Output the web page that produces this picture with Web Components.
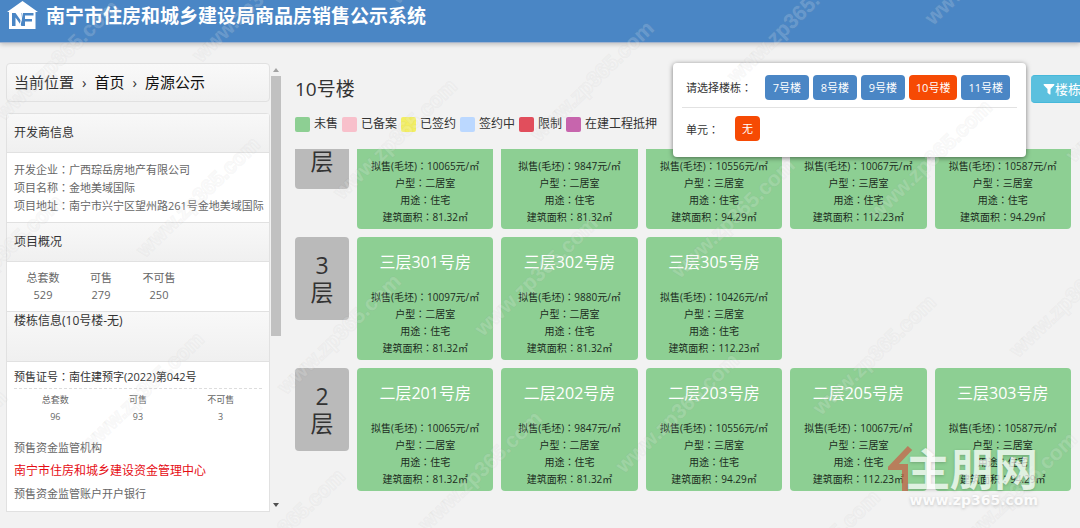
<!DOCTYPE html>
<html lang="zh-CN">
<head>
<meta charset="utf-8">
<title>南宁市住房和城乡建设局商品房销售公示系统</title>
<style>
html,body{height:100%}
body{margin:0;background:#f2f2f2;color:#333;font-family:"Open Sans","Noto Sans CJK SC",sans-serif;overflow:hidden}
</style>
</head>
<body>
<sales-app></sales-app>
<script>
const base='<style>*{box-sizing:border-box}:host{display:block}a{color:inherit;text-decoration:none}button{font-family:inherit;cursor:pointer}.colon{font-family:"Noto Sans CJK TC",sans-serif;line-height:0}</style>';
/* Full-width colons are set from the face that centres them in their cell. */
const centreColons=html=>html.replace(/：/g,'<span class="colon" lang="zh-TW">：</span>');
function define(name,render){
  customElements.define(name,class extends HTMLElement{
    connectedCallback(){
      if(this.shadowRoot)return;
      this.attachShadow({mode:'open'}).innerHTML=base+centreColons(render(this));
    }
  });
}

define('app-header',()=>`<style>
:host{background:#4a86c5;border-bottom:1px solid #a3b4ce;box-shadow:0 1px 5px rgba(0,0,0,.25);height:43px;flex:none}
header{display:flex;align-items:center;gap:8px;padding:1px 7px;height:32px}
h1{margin:0;font-size:19px;line-height:28px;font-weight:700;color:#fff;white-space:nowrap}
svg{display:block;flex:none}
</style>
<header>
<svg width="31" height="30" viewBox="0 0 31 30" aria-hidden="true">
<path d="M15.500 0 31 11h-2.500v17H2V11H0z" fill="#fff"/>
<path d="M5 25V12h3.500l6 8.500V12h12v2.500h-8.500v3.500h7v2.500h-7V25h-3.500l-6-8.500V25z" fill="#4a86c5"/>
<path d="M15.500 12 13 25" stroke="#fff" stroke-width="1"/>
</svg>
<h1><slot></slot></h1></header>`);

define('crumb-bar',()=>`<style>
:host{border:1px solid #e1e1e1;border-radius:4px;background:linear-gradient(#f9f9f9,#f1f1f1);height:39px}
nav{display:flex;gap:8px;padding:0 7px;font-size:15px;line-height:37px;white-space:nowrap}
a{color:#111}
</style><nav aria-label="当前位置"><span>当前位置</span><span>›</span><a href="#home">首页</a><span>›</span><a href="#list">房源公示</a></nav>`);

define('info-section',el=>`<style>
h2{margin:0;font-size:12px;font-weight:400;line-height:38px;height:40px;padding:0 7px;border-bottom:1px solid #e1e1e1;border-top:1px solid #e1e1e1;background:linear-gradient(#f8f8f8,#f0f0f0)}
:host([tall]) h2{line-height:18px;height:51px}
.body{padding:0 7px;font-size:11px;line-height:18px;color:#666}
</style><h2>${el.getAttribute('heading')}</h2><div class="body"><slot></slot></div>`);

define('stat-table',el=>{
  const heads=['总套数','可售','不可售'],vals=el.getAttribute('values').split(',');
  return `<style>
table{border-collapse:collapse;table-layout:fixed;width:174px;font-size:11px;line-height:17px;color:#666;text-align:center}
:host([wide]) table{width:100%;font-size:9px}
th,td{padding:0;font-weight:400}
</style><table><thead><tr>${heads.map(h=>`<th scope="col">${h}</th>`).join('')}</tr></thead><tbody><tr>${vals.map(v=>`<td>${v}</td>`).join('')}</tr></tbody></table>`;
});

define('side-panel',()=>`<style>
:host{display:flex;flex:none;width:276px;height:100%;overflow:hidden}
.content{flex:1;display:flex;flex-direction:column;gap:11px;min-width:0}
.card{border:1px solid #e1e1e1;border-top:0;border-radius:4px 4px 0 0;background:#fff;flex:1;overflow:hidden;white-space:nowrap}
p{margin:0}
.dev{padding:8px 0 7px}
.sum{padding:7px 0 8px}
.permit{padding:6px 0 2px;border-bottom:1px dashed #ddd;color:#333;margin-bottom:2px}
.bank{padding-top:11px;line-height:23px}
.bank strong{display:block;font-weight:400;font-size:12px;color:#e60c14}
.bar{width:12px;flex:none;display:flex;flex-direction:column;align-items:center;padding:5px 0}
.thumb{width:10px;height:260px;background:#c1c1c1;margin-top:4px}
.bar svg{display:block}
.end{margin-top:auto}
</style>
<div class="content">
<crumb-bar></crumb-bar>
<div class="card">
<info-section heading="开发商信息"><div class="dev"><p>开发企业：广西琮岳房地产有限公司</p><p>项目名称：金地美域国际</p><p>项目地址：南宁市兴宁区望州路261号金地美域国际</p></div></info-section>
<info-section heading="项目概况"><div class="sum"><stat-table values="529,279,250"></stat-table></div></info-section>
<info-section heading="楼栋信息(10号楼-无)" tall>
<p class="permit">预售证号：南住建预字(2022)第042号</p>
<stat-table wide values="96,93,3"></stat-table>
<div class="bank"><p>预售资金监管机构</p><strong>南宁市住房和城乡建设资金管理中心</strong><p>预售资金监管账户开户银行</p></div>
</info-section>
</div></div>
<div class="bar" aria-hidden="true">
<svg width="6" height="4"><path d="M3 0 6 4H0z" fill="#a3a3a3"/></svg>
<div class="thumb"></div>
<svg class="end" width="6" height="4"><path d="M3 4 6 0H0z" fill="#505050"/></svg>
</div>`);

define('status-legend',()=>{
  const items=[['#8dcf93','未售'],['#f8c0cb','已备案'],['#f3ef62','已签约'],['#bbd8ff','签约中'],['#e14e5c','限制'],['#c765ad','在建工程抵押']];
  return `<style>
ul{display:flex;gap:4px;list-style:none;margin:0;padding:0;font-size:12px;line-height:16px;white-space:nowrap}
li{display:flex;align-items:center;gap:4px}
i{width:15px;height:15px;border-radius:2px}
</style><ul>${items.map(([c,t])=>`<li><i style="background:${c}"></i>${t}</li>`).join('')}</ul>`;
});

define('room-card',el=>{
  const a=n=>el.getAttribute(n);
  return `<style>
:host{background:#8dcf93;border-radius:4px;padding:12px 4px 3px;text-align:center;white-space:nowrap;color:#1c2c1e}
h3{margin:0 0 14px;height:26px;font-size:16px;line-height:26px;font-weight:400;color:#fff}
p{margin:0;height:17px;font-size:10px;line-height:17px}
</style><h3>${a('name')}</h3><p>拟售(毛坯)：${a('price')}元/㎡</p><p>户型：${a('type')}居室</p><p>用途：住宅</p><p>建筑面积：${a('area')}㎡</p>`;
});

define('floor-row',el=>`<style>
:host{display:grid;grid-template-columns:54px repeat(5,minmax(0,1fr));gap:8px;align-items:start;flex:none}
.label{background:#bababa;border-radius:4px;height:83px;padding:15px 0;text-align:center;font-size:23px;line-height:27px}
.label span{display:block;height:27px}
</style><div class="label"><span>${el.getAttribute('floor')}</span><span>层</span></div><slot></slot>`);

define('floor-list',()=>{
  const floors=[
    ['',[['','10065','二','81.32'],['','9847','二','81.32'],['','10556','三','94.29'],['','10067','三','112.23'],['','10587','三','94.29']]],
    ['3',[['三层301号房','10097','二','81.32'],['三层302号房','9880','二','81.32'],['三层305号房','10426','三','112.23']]],
    ['2',[['二层201号房','10065','二','81.32'],['二层202号房','9847','二','81.32'],['二层203号房','10556','三','94.29'],['二层205号房','10067','三','112.23'],['三层303号房','10587','三','94.29']]]];
  return `<style>
:host{display:flex;flex-direction:column;justify-content:flex-end;gap:8px;overflow:hidden;min-height:0;flex:1}
</style>${floors.map(([f,rooms])=>`<floor-row floor="${f}">${rooms.map(([n,p,t,a])=>`<room-card name="${n}" price="${p}" type="${t}" area="${a}"></room-card>`).join('')}</floor-row>`).join('')}`;
});

define('building-filter',()=>`<style>
:host{position:absolute;top:63px;right:-21px;display:flex;align-items:flex-start;gap:5px}
.pop{width:353px;height:94px;background:#fff;border-radius:4px;box-shadow:0 1px 5px rgba(0,0,0,.5);padding:12px 9px;font-size:11px}
.row{display:flex;align-items:center;gap:4px;height:25px;padding:0 7px 0 4px;white-space:nowrap}
.row:first-child{height:33px;padding-bottom:8px;border-bottom:1px solid #e2e2e2;margin-bottom:8px}
.first{margin-left:auto}
.unit{margin-left:12px}
.pop button{border:0;border-radius:4px;height:25px;padding:0 7px;background:#4a86c5;color:#fff;font-size:11px;line-height:25px}
.pop button:not(.unit){min-width:44px}
.pop button[aria-pressed=true]{background:#f64a04}
.open{display:flex;align-items:center;margin-top:12px;height:28px;padding:0 20px 0 12px;border:1px solid #46b8da;border-width:1px 0;border-radius:4px;background:#5bc0de;color:#fff;font-size:13px;line-height:26px;white-space:nowrap}
</style>
<div class="pop">
<div class="row" role="group" aria-label="楼栋"><span>请选择楼栋：</span><button class="first" aria-pressed="false">7号楼</button><button aria-pressed="false">8号楼</button><button aria-pressed="false">9号楼</button><button aria-pressed="true">10号楼</button><button aria-pressed="false">11号楼</button></div>
<div class="row" role="group" aria-label="单元"><span>单元：</span><button class="unit" aria-pressed="true">无</button></div>
</div>
<button class="open"><svg width="12" height="12" viewBox="0 0 12 12" aria-hidden="true"><path d="M1 1h10q.8.500.2 1.200L7.500 6v5.200q-.3.600-.9.200L4.500 9.800V6L.8 2.200Q.2 1.500 1 1z" fill="#fff"/></svg>楼栋</button>`);

define('water-mark',()=>{
  let t='';
  for(let i=-3;i<6;i++)for(let j=-2;j<5;j++){
    const x=342+i*197-j*56,y=200-i*58+j*195;
    if(x>-110&&x<1080&&y>0&&y<640)t+=`<text transform="translate(${x} ${y}) rotate(-44)">www.zp365.com</text>`;
  }
  return `<style>
:host{position:absolute;inset:0;overflow:hidden;pointer-events:none}
svg{display:block;width:100%;height:100%}
text{font:bold 21px "Liberation Sans",sans-serif;fill:rgba(255,255,255,.18);stroke:rgba(150,150,150,.07);stroke-width:2px;paint-order:stroke}
</style><svg aria-hidden="true">${t}</svg>`;
});

define('brand-stamp',()=>`<style>
:host{position:absolute;right:42px;bottom:20px;display:flex;flex-direction:column;align-items:flex-end;color:#fff;opacity:.72;pointer-events:none;text-shadow:0 1px 3px rgba(0,0,0,.25)}
.name{display:flex;align-items:center;font:700 44px/50px "Noto Sans CJK SC",sans-serif;height:50px}
.url{font:bold 14px/16px "DejaVu Sans",sans-serif}
svg{display:block;margin-right:-7px}
</style><div class="name"><svg width="25" height="50" viewBox="0 0 25 50" aria-hidden="true"><path d="M22 6 4 25H17V49" fill="none" stroke="#c95f48" stroke-width="6"/></svg><span>主朋网</span></div><div class="url">www.zp365.com</div>`);

define('sales-app',()=>`<style>
:host{position:relative;display:flex;flex-direction:column;height:100vh;overflow:hidden}
.page{flex:1;min-height:0;display:flex;gap:13px;padding:20px 9px 0 6px}
.side{padding-bottom:16px;flex:none;min-height:0}
main{flex:1;min-width:0;display:flex;flex-direction:column;padding-bottom:37px}
h2{margin:12px 0 13px;font-size:19px;line-height:28px;font-weight:400}
status-legend{margin-bottom:17px}
</style>
<app-header>南宁市住房和城乡建设局商品房销售公示系统</app-header>
<div class="page"><div class="side"><side-panel></side-panel></div>
<main><h2>10号楼</h2><status-legend></status-legend><floor-list></floor-list></main></div>
<building-filter></building-filter><water-mark></water-mark><brand-stamp></brand-stamp>`);
</script>
</body>
</html>
